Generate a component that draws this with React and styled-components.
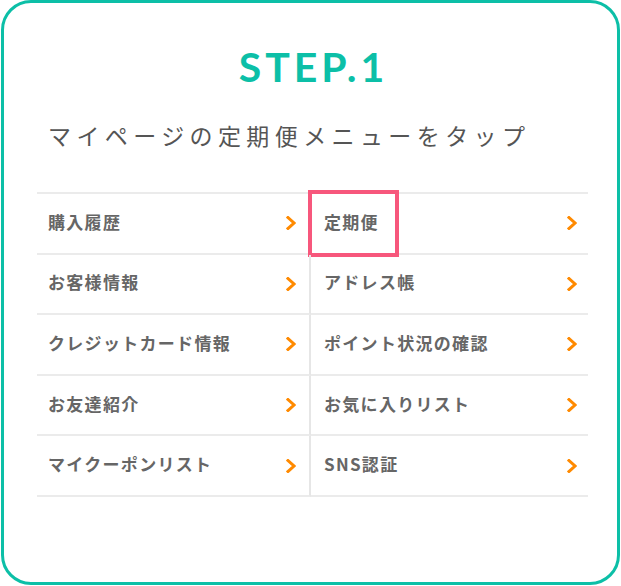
import React from "react";
import styled, { createGlobalStyle } from "styled-components";

const Global = createGlobalStyle`
  html, body { margin: 0; padding: 0; background: #fff; }
  body { font-family: "Noto Sans CJK JP", "Noto Sans", sans-serif; }
`;

const Card = styled.div`
  box-sizing: border-box;
  width: 619px;
  height: 585px;
  margin-left: 1px;
  border: 3px solid #0cbfa7;
  border-radius: 30px;
  padding: 44px 29px 0 33px;
  background: #fff;
`;

const Title = styled.h1`
  margin: 0;
  padding-left: 2px;
  font-family: "Lato", "Noto Sans", sans-serif;
  font-weight: 700;
  font-size: 41px;
  line-height: 40px;
  letter-spacing: 4px;
  color: #0cbfa7;
  text-align: center;
`;

const Lead = styled.p`
  margin: 37px 0 0 11px;
  font-size: 23px;
  line-height: 22px;
  letter-spacing: 5.4px;
  color: #555;
  font-weight: 400;
`;

const Menu = styled.div`
  margin-top: 46px;
  width: 551px;
  display: grid;
  grid-template-columns: 274px 277px;
  grid-auto-rows: 60.6px;
  border-top: 2px solid #ebebeb;
`;

const Cell = styled.div`
  position: relative;
  box-sizing: border-box;
  display: flex;
  align-items: center;
  justify-content: space-between;
  padding-left: ${(p) => (p.$right ? "13px" : "11px")};
  padding-right: ${(p) => (p.$right ? "11px" : "13px")};
  border-bottom: 2px solid #ebebeb;
  border-right: ${(p) => (p.$right ? "none" : "2px solid #e6e6e6")};
`;

const Label = styled.span`
  margin-bottom: 4px;
  font-size: 17px;
  font-weight: 700;
  letter-spacing: 1.3px;
  color: #666;
  line-height: 1;
`;

const Highlight = styled.div`
  position: absolute;
  left: -3px;
  top: -4px;
  width: 91px;
  height: 67px;
  box-sizing: border-box;
  border: 4px solid #f7577c;
`;

const Chevron = () => (
  <svg width="10" height="14" viewBox="0 0 10 14" aria-hidden="true">
    <polyline
      points="2,1.5 8,7 2,12.5"
      fill="none"
      stroke="#ff8a00"
      strokeWidth="3"
      strokeLinecap="square"
      strokeLinejoin="miter"
    />
  </svg>
);

const items = [
  ["購入履歴", "定期便"],
  ["お客様情報", "アドレス帳"],
  ["クレジットカード情報", "ポイント状況の確認"],
  ["お友達紹介", "お気に入りリスト"],
  ["マイクーポンリスト", "SNS認証"],
];

export default function App() {
  return (
    <>
      <Global />
      <Card>
        <Title>STEP.1</Title>
        <Lead>マイページの定期便メニューをタップ</Lead>
        <Menu>
          {items.map(([l, r], i) => (
            <React.Fragment key={i}>
              <Cell>
                <Label>{l}</Label>
                <Chevron />
              </Cell>
              <Cell $right>
                {i === 0 && <Highlight />}
                <Label>{r}</Label>
                <Chevron />
              </Cell>
            </React.Fragment>
          ))}
        </Menu>
      </Card>
    </>
  );
}
